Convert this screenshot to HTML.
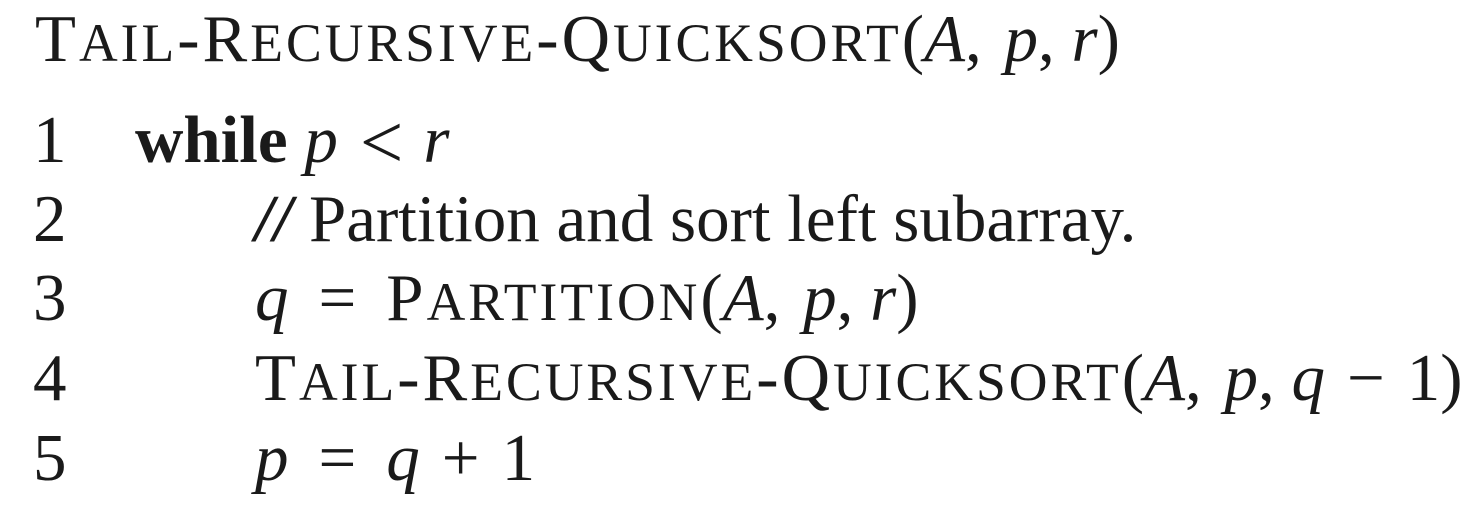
<!DOCTYPE html>
<html><head><meta charset="utf-8"><style>
html,body{margin:0;padding:0;background:#fff;}
body{width:1484px;height:510px;position:relative;overflow:hidden;font-family:"Liberation Serif",serif;font-size:67px;color:#1a1a1a;}
.l{position:absolute;left:0;white-space:nowrap;line-height:1;}
.n{position:absolute;left:33px;}
.c1{position:absolute;left:135px;}
.c2{position:absolute;left:255px;}
i{font-style:italic;}
.sc{letter-spacing:3px;}
.sc s{text-decoration:none;font-size:0.8em;}
b{font-weight:bold;}
.op{display:inline-block;margin:0 30px;}
.op2{display:inline-block;margin:0 22px;}
.cm{margin-right:6px;}
</style></head><body>
<div class="l" style="top:6px;left:35px;"><span class="sc">T<s>AIL</s>-R<s>ECURSIVE</s>-Q<s>UICKSORT</s></span>(<i>A</i>,<span class="cm"></span> <i>p</i>, <i>r</i>)</div>
<div class="l" style="top:107px;"><span class="n">1</span><span class="c1"><b>while</b> <i>p</i><span class="op2" style="margin:0 20px 0 22px;font-size:1.15em;line-height:0;position:relative;top:6px">&lt;</span><i>r</i></span></div>
<div class="l" style="top:186px;"><span class="n">2</span><span class="c2"><b><i>//</i></b> Partition and sort left subarray.</span></div>
<div class="l" style="top:265px;"><span class="n">3</span><span class="c2"><i>q</i><span class="op">=</span><span class="sc">P<s>ARTITION</s></span>(<i>A</i>,<span class="cm"></span> <i>p</i>, <i>r</i>)</span></div>
<div class="l" style="top:345px;"><span class="n">4</span><span class="c2"><span class="sc">T<s>AIL</s>-R<s>ECURSIVE</s>-Q<s>UICKSORT</s></span>(<i>A</i>,<span class="cm"></span> <i>p</i>, <i>q</i><span class="op2">−</span>1)</span></div>
<div class="l" style="top:425px;"><span class="n">5</span><span class="c2"><i>p</i><span class="op">=</span><i>q</i><span class="op2">+</span>1</span></div>
</body></html>
